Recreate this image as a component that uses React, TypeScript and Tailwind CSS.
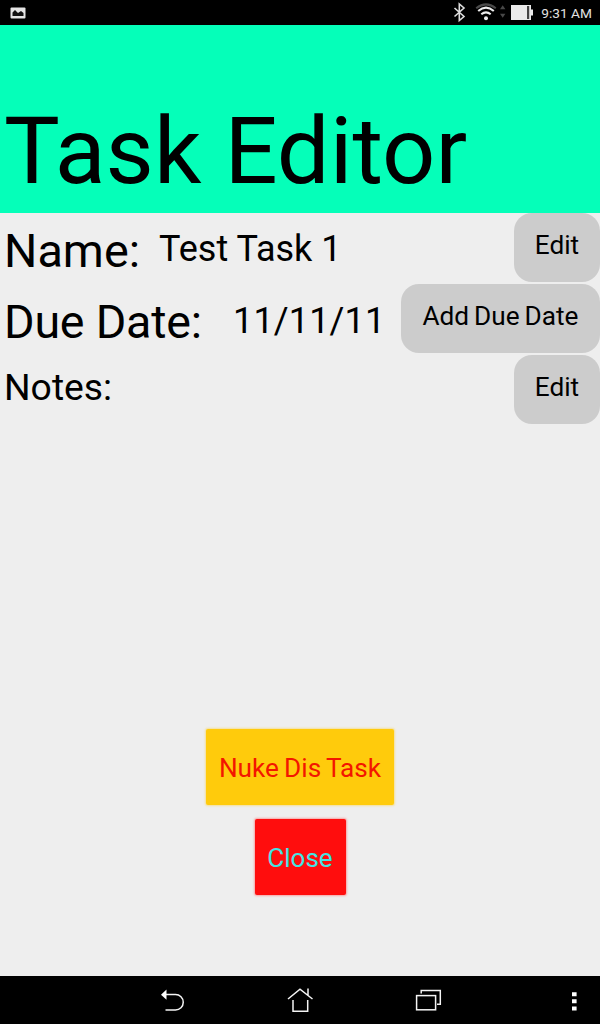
import type { ReactNode } from "react";

function StatusBar() {
  return (
    <div className="flex h-[25px] items-center justify-between bg-black pr-2 pl-[10px]">
      <svg width="16" height="25" viewBox="0 0 16 25">
        <rect x="0.5" y="7.5" width="15" height="11" rx="1" fill="#e4e4e4" />
        <path d="M2.5 16V12.5L5 10L8 13L11 11L13.5 13V16Z" fill="#111" />
      </svg>
      <div className="flex h-full items-center">
        <svg width="91" height="25" viewBox="0 0 91 25" fill="none">
          <path d="M4.5 8L14 16.5L9.3 20.5V4L14 8L4.5 16.5" stroke="#ddd" strokeWidth="1.6" />
          <path d="M26.2 8.2Q36 0.5 45.8 8.2" stroke="#4a4a4a" strokeWidth="2" />
          <path d="M28.2 11Q36 4.4 43.8 11" stroke="#eee" strokeWidth="2.1" />
          <path d="M31.3 14.3Q36 10.4 40.7 14.3" stroke="#eee" strokeWidth="2.1" />
          <circle cx="36" cy="18.2" r="2" fill="#eee" />
          <path d="M50 9.2L52.7 5.2L55.4 9.2ZM50 13.8L52.7 17.8L55.4 13.8Z" fill="#484848" />
          <rect x="61" y="5" width="20" height="15" fill="#eaeaea" />
          <rect x="77" y="6" width="2.2" height="13" fill="#444" />
          <rect x="81" y="9.5" width="2" height="6" fill="#eaeaea" />
        </svg>
        <span className="pt-px text-[13.7px] leading-[25px] whitespace-nowrap text-[#e2e2e2]">9:31 AM</span>
      </div>
    </div>
  );
}

function GreyButton({ width, children }: { width: string; children: ReactNode }) {
  return (
    <button
      className={`${width} ml-auto h-[69px] shrink-0 rounded-[18px] bg-[#cccccc] pb-1 text-center text-[26.2px] leading-[65px] whitespace-nowrap [word-spacing:-1.5px]`}
    >
      {children}
    </button>
  );
}

function NavBar() {
  return (
    <div className="flex h-12 items-center bg-black">
      <svg width="600" height="48" viewBox="0 0 600 48" fill="none" stroke="#f4f4f4" strokeWidth="1.5">
        <path d="M165.5 18.5H175.5A7.7 7.7 0 0 1 175.5 34H165.5" />
        <path d="M161 18.7L166.5 13.5V23.8Z" fill="#fff" stroke="none" />
        <path d="M288 23L300 13.2L312.5 23M293 24V35.2H307.7V24M308 19V12.5" />
        <rect x="416.6" y="19.6" width="19" height="14.2" />
        <path d="M421.2 17.5V14.5H440.3V28.3H437" />
        <path d="M572 16.2H576.6V20.2H572ZM572 23.2H576.6V27.2H572ZM572 30.4H576.6V34.4H572Z" fill="#fff" stroke="none" />
      </svg>
    </div>
  );
}

export default function App() {
  return (
    <div className="flex h-[1024px] w-[600px] flex-col overflow-hidden bg-[#eeeeee] font-[Roboto,sans-serif] text-black">
      <StatusBar />
      <header className="h-[188px] bg-[#05ffb9] pt-[71px] pl-1">
        <h1 className="text-[93.6px] leading-[110px] whitespace-nowrap">Task Editor</h1>
      </header>
      <main className="flex flex-1 flex-col">
        <div className="flex h-[71px] items-start whitespace-nowrap">
          <span className="w-[159px] pt-[3px] pl-1 text-[46.8px] leading-[71px]">Name:</span>
          <span className="pt-px text-[36px] leading-[71px]">Test Task 1</span>
          <GreyButton width="w-[86px]">Edit</GreyButton>
        </div>
        <div className="flex h-[71px] items-start whitespace-nowrap">
          <span className="w-[233px] pt-[3px] pl-1 text-[46.6px] leading-[71px] tracking-[-0.2px]">Due Date:</span>
          <span className="pt-0.5 text-[36px] leading-[71px] tracking-[0.15px]">11/11/11</span>
          <GreyButton width="w-[199px]">Add Due Date</GreyButton>
        </div>
        <div className="flex h-[71px] items-start whitespace-nowrap">
          <span className="pl-1 text-[37.3px] leading-[65px]">Notes:</span>
          <GreyButton width="w-[86px]">Edit</GreyButton>
        </div>
        <div className="mt-auto flex flex-col items-center pb-[81px]">
          <button className="mb-[14px] h-[76px] w-[188px] rounded-xs bg-[#ffcb0c] pt-0.5 text-[26.2px] leading-[74px] whitespace-nowrap text-[#f31600] shadow-[0_0_2px_1px_#f4df98] [word-spacing:-1.3px]">
            Nuke Dis Task
          </button>
          <button className="h-[76px] w-[91px] rounded-xs bg-[#ff0d0d] pt-0.5 text-[26px] leading-[74px] whitespace-nowrap text-[#43e4e4] shadow-[0_0_2px_1px_#f6a5a5]">
            Close
          </button>
        </div>
      </main>
      <NavBar />
    </div>
  );
}
